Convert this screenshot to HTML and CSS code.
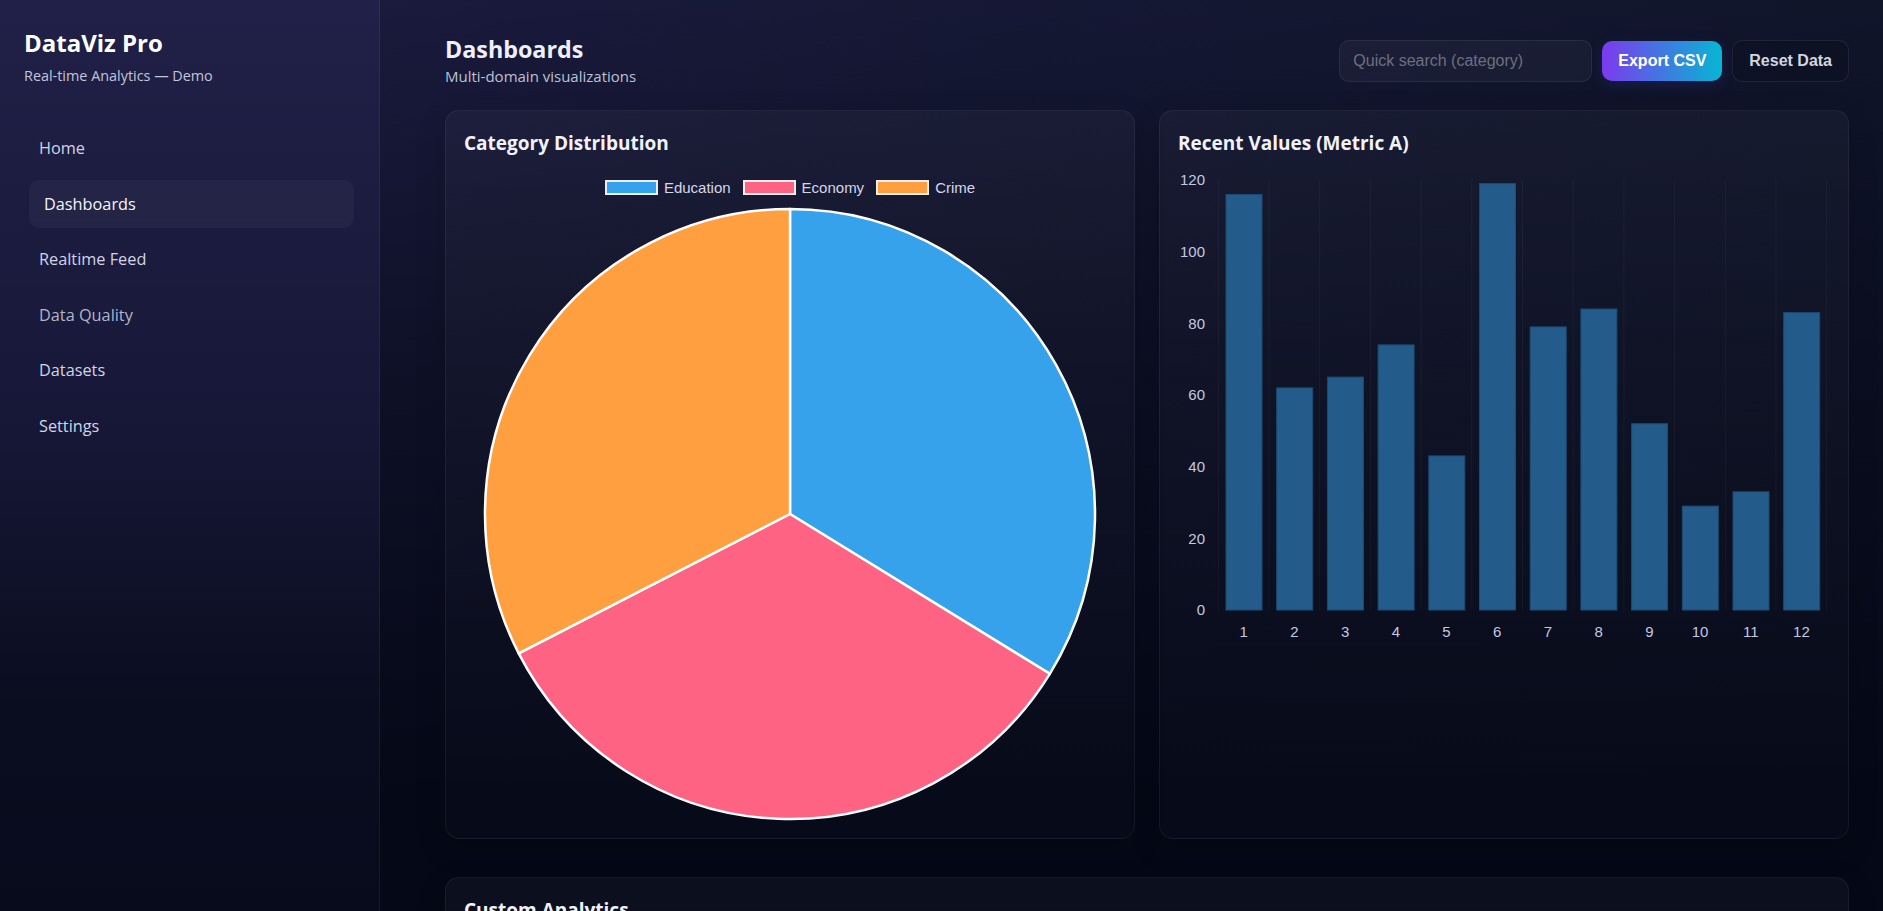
FILE: index.html
```html
<!DOCTYPE html>
<html lang="en">
<head>
<meta charset="utf-8">
<title>DataViz Pro — Dashboards</title>
<link rel="stylesheet" href="styles.css">
</head>
<body>
<div class="app">
  <aside class="sidebar">
    <div class="brand">
      <h1 class="brand-title">DataViz Pro</h1>
      <p class="brand-sub">Real-time Analytics — Demo</p>
    </div>
    <nav class="nav">
      <a class="nav-item">Home</a>
      <a class="nav-item active">Dashboards</a>
      <a class="nav-item">Realtime Feed</a>
      <a class="nav-item muted">Data Quality</a>
      <a class="nav-item">Datasets</a>
      <a class="nav-item">Settings</a>
    </nav>
  </aside>

  <main class="main">
    <header class="topbar">
      <div class="page-head">
        <h2 class="page-title">Dashboards</h2>
        <p class="page-sub">Multi-domain visualizations</p>
      </div>
      <div class="actions">
        <input class="search" type="text" placeholder="Quick search (category)">
        <button class="btn btn-primary">Export CSV</button>
        <button class="btn btn-ghost">Reset Data</button>
      </div>
    </header>

    <section class="grid">
      <div class="card">
        <h3 class="card-title">Category Distribution</h3>
        <div class="pie-wrap">
          <div class="legend">
            <span class="legend-item"><span class="swatch sw-blue"></span>Education</span>
            <span class="legend-item"><span class="swatch sw-pink"></span>Economy</span>
            <span class="legend-item"><span class="swatch sw-orange"></span>Crime</span>
          </div>
          <svg class="pie" width="614" height="614" viewBox="0 0 614 614">
            <g stroke="#ffffff" stroke-width="2.5" stroke-linejoin="round">
              <path fill="#36a2eb" d="M307,307 L307,2 A305,305 0 0 1 566.8,466.8 Z"/>
              <path fill="#ff6384" d="M307,307 L566.8,466.8 A305,305 0 0 1 35.7,446.4 Z"/>
              <path fill="#ff9f40" d="M307,307 L35.7,446.4 A305,305 0 0 1 307,2 Z"/>
            </g>
          </svg>
        </div>
      </div>

      <div class="card">
        <h3 class="card-title">Recent Values (Metric A)</h3>
        <svg class="bars" width="652" height="490" viewBox="0 0 652 490">
          <g stroke="rgba(255,255,255,0.045)" stroke-width="1">
            <line x1="40.3" y1="20" x2="40.3" y2="450"/>
            <line x1="91" y1="20" x2="91" y2="450"/>
            <line x1="141.7" y1="20" x2="141.7" y2="450"/>
            <line x1="192.4" y1="20" x2="192.4" y2="450"/>
            <line x1="243.1" y1="20" x2="243.1" y2="450"/>
            <line x1="293.8" y1="20" x2="293.8" y2="450"/>
            <line x1="344.5" y1="20" x2="344.5" y2="450"/>
            <line x1="395.2" y1="20" x2="395.2" y2="450"/>
            <line x1="445.9" y1="20" x2="445.9" y2="450"/>
            <line x1="496.6" y1="20" x2="496.6" y2="450"/>
            <line x1="547.3" y1="20" x2="547.3" y2="450"/>
            <line x1="598" y1="20" x2="598" y2="450"/>
            <line x1="648.7" y1="20" x2="648.7" y2="450"/>
          </g>
          <g class="ytick" text-anchor="end">
            <text x="27" y="25.4">120</text>
            <text x="27" y="97.1">100</text>
            <text x="27" y="168.7">80</text>
            <text x="27" y="240.4">60</text>
            <text x="27" y="312.1">40</text>
            <text x="27" y="383.7">20</text>
            <text x="27" y="455.4">0</text>
          </g>
          <g fill="#235c8a" stroke="#1c4a73" stroke-width="1">
            <rect x="48" y="34.4" width="36" height="415.6"/>
            <rect x="98.7" y="227.9" width="36" height="222.1"/>
            <rect x="149.4" y="217.1" width="36" height="232.9"/>
            <rect x="200.1" y="184.9" width="36" height="265.1"/>
            <rect x="250.8" y="295.9" width="36" height="154.1"/>
            <rect x="301.5" y="23.6" width="36" height="426.4"/>
            <rect x="352.2" y="166.9" width="36" height="283.1"/>
            <rect x="402.9" y="149" width="36" height="301"/>
            <rect x="453.6" y="263.7" width="36" height="186.3"/>
            <rect x="504.3" y="346.1" width="36" height="103.9"/>
            <rect x="555" y="331.8" width="36" height="118.2"/>
            <rect x="605.7" y="152.6" width="36" height="297.4"/>
          </g>
          <g class="xtick" text-anchor="middle">
            <text x="65.7" y="477">1</text>
            <text x="116.4" y="477">2</text>
            <text x="167.1" y="477">3</text>
            <text x="217.8" y="477">4</text>
            <text x="268.5" y="477">5</text>
            <text x="319.2" y="477">6</text>
            <text x="369.9" y="477">7</text>
            <text x="420.6" y="477">8</text>
            <text x="471.3" y="477">9</text>
            <text x="522" y="477">10</text>
            <text x="572.7" y="477">11</text>
            <text x="623.4" y="477">12</text>
          </g>
        </svg>
      </div>
    </section>

    <section class="card card-wide">
      <h3 class="card-title">Custom Analytics</h3>
    </section>
  </main>
</div>
</body>
</html>
```

FILE: styles.css
```css
* { box-sizing: border-box; }

html, body {
  margin: 0;
  height: 100%;
  overflow: hidden;
}

body {
  font-family: "Open Sans", "Noto Sans", sans-serif;
  color: #e8eaf6;
  background:
    linear-gradient(180deg, rgba(5, 8, 22, 0) 0%, rgba(5, 8, 22, 0.6) 45%, #050816 88%),
    linear-gradient(90deg, #1d1c42 0%, #151834 55%, #10152b 100%);
  background-color: #050816;
}

.app {
  display: flex;
  height: 100vh;
}

/* Sidebar */
.sidebar {
  width: 380px;
  flex-shrink: 0;
  height: 100vh;
  padding: 28px 30px 28px 24px;
  border-right: 1px solid rgba(255, 255, 255, 0.06);
  background: linear-gradient(180deg, #212048 0%, #171838 45%, #0a0d1f 78%, #080b1c 100%);
}

.brand-title {
  margin: 0;
  font-size: 24px;
  line-height: 30px;
  font-weight: 700;
  color: #ffffff;
}

.brand-sub {
  margin: 8px 0 0;
  font-size: 14.4px;
  line-height: 20px;
  color: #c2c6da;
}

.nav {
  margin-top: 38px;
  display: flex;
  flex-direction: column;
  gap: 7.6px;
}

.nav-item {
  display: block;
  padding: 12px 15px;
  font-size: 16.3px;
  line-height: 24px;
  color: #d0d4e6;
  border-radius: 10px;
}

.nav-item.active {
  background: rgba(255, 255, 255, 0.035);
  color: #f4f5ff;
  transform: translateX(5px);
}

.nav-item.muted {
  color: #b0b5ca;
}

/* Main */
.main {
  flex: 1;
  min-width: 0;
  padding: 35px 34px 0 65px;
}

.topbar {
  display: flex;
  align-items: center;
  justify-content: space-between;
  margin-bottom: 24px;
}

.page-title {
  margin: 0;
  font-size: 23.3px;
  line-height: 28px;
  font-weight: 700;
  color: #eef0ff;
}

.page-sub {
  margin: 3px 0 0;
  font-size: 15px;
  line-height: 20px;
  color: #bcc1d6;
}

.actions {
  display: flex;
  align-items: center;
  gap: 10px;
  margin-top: 0;
}

.search {
  width: 253px;
  height: 42px;
  padding: 0 13px;
  border: 1px solid rgba(255, 255, 255, 0.07);
  border-radius: 10px;
  background: rgba(255, 255, 255, 0.035);
  color: #e5e7eb;
  font-family: "Liberation Sans", Arial, sans-serif;
  font-size: 16px;
  outline: none;
}

.search::placeholder {
  color: #6b7080;
}

.btn {
  font-family: "Liberation Sans", Arial, sans-serif;
  font-size: 16px;
  font-weight: 700;
  border-radius: 10px;
  padding: 0 16px;
  cursor: pointer;
}

.btn-primary {
  height: 40px;
  border: none;
  color: #ffffff;
  background: linear-gradient(90deg, #7c3aed 0%, #06b6d4 100%);
  box-shadow: 0 4px 14px rgba(40, 60, 160, 0.25);
}

.btn-ghost {
  height: 42px;
  border: 1px solid rgba(255, 255, 255, 0.08);
  background: rgba(0, 0, 0, 0.1);
  color: #d3d6df;
}

/* Cards */
.grid {
  display: grid;
  grid-template-columns: 1fr 1fr;
  gap: 24px;
}

.card {
  border: 1px solid rgba(255, 255, 255, 0.06);
  border-radius: 14px;
  background: linear-gradient(180deg, rgba(255, 255, 255, 0.032) 0%, rgba(255, 255, 255, 0.012) 100%);
  padding: 19px 18px 17px;
  box-shadow: 0 10px 30px rgba(0, 0, 0, 0.18);
}

.card-title {
  margin: 0;
  font-size: 19px;
  line-height: 26px;
  font-weight: 700;
  color: #f1f2fb;
}

.pie-wrap {
  display: flex;
  flex-direction: column;
  align-items: center;
  margin-top: 23px;
}

.legend {
  display: flex;
  align-items: center;
  gap: 12px;
  height: 16px;
  font-family: "Liberation Sans", Arial, sans-serif;
  font-size: 15px;
  color: #d4d7ea;
  margin-bottom: 12px;
}

.legend-item {
  display: flex;
  align-items: center;
  gap: 6px;
}

.swatch {
  display: inline-block;
  width: 53px;
  height: 15px;
  border: 2px solid #eeeeee;
}

.sw-blue { background: #36a2eb; }
.sw-pink { background: #ff6384; }
.sw-orange { background: #ff9f40; }

.pie {
  display: block;
}

.bars {
  display: block;
  margin-top: 4px;
}

.bars text {
  font-family: "Liberation Sans", Arial, sans-serif;
  font-size: 15px;
  fill: #c3c8e2;
}

.card-wide {
  margin-top: 38px;
  height: 320px;
}
```
